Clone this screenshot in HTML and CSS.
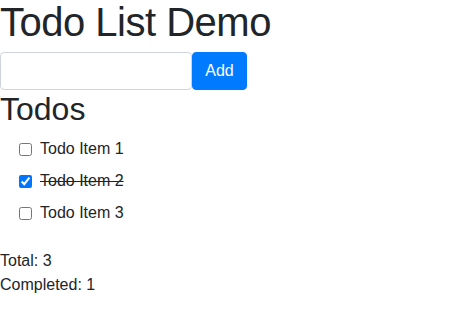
FILE: index.html
```html
<!DOCTYPE html>
<html lang="en">
<head>
    <meta charset="UTF-8">
    <title>Todo List Demo</title>
    <link rel="stylesheet" href="styles.css">
</head>
<body>
    <h1 class="page-title">Todo List Demo</h1>

    <form class="add-form">
        <input type="text" class="form-control">
        <button type="button" class="btn btn-primary">Add</button>
    </form>

    <h2 class="section-title">Todos</h2>
    <ul class="todo-list">
        <li class="todo-item">
            <input type="checkbox">
            <span>Todo Item 1</span>
        </li>
        <li class="todo-item done">
            <input type="checkbox" checked>
            <span>Todo Item 2</span>
        </li>
        <li class="todo-item">
            <input type="checkbox">
            <span>Todo Item 3</span>
        </li>
    </ul>

    <div class="stats">
        <div>Total: 3</div>
        <div>Completed: 1</div>
    </div>
</body>
</html>
```

FILE: styles.css
```css
* { box-sizing: border-box; }

body { margin: 0; font-family: "Liberation Sans", Arial, sans-serif; font-size: 16px; line-height: 1.5; color: #212529; background: #fff; }

/* TITULOS */
.page-title { font-size: 40px; font-weight: 400; line-height: 44px; letter-spacing: -0.5px; margin: 0 0 8px; }
.section-title { font-size: 32px; font-weight: 400; line-height: 38px; margin: 0 0 5px; }

/* FORM */
.add-form { display: flex; align-items: stretch; }
.form-control { width: 192px; height: 38px; padding: 6px 12px; border: 1px solid #ced4da; border-radius: 4px; font-size: 16px; }
.btn { width: 55px; height: 38px; padding: 6px 12px; border: 1px solid transparent; border-radius: 4px; font-size: 16px; font-family: inherit; cursor: pointer; }
.btn-primary { background: #007bff; color: #fff; border-color: #007bff; }

/* LISTA */
.todo-list { list-style: none; margin: 0 0 20px; padding: 0 0 0 19px; }
.todo-item { display: flex; align-items: center; gap: 8px; padding: 4px 0; }
.todo-item input { margin: 0; width: 13px; height: 13px; }
.todo-item.done span { text-decoration: line-through; }

.stats { line-height: 24px; }
```
